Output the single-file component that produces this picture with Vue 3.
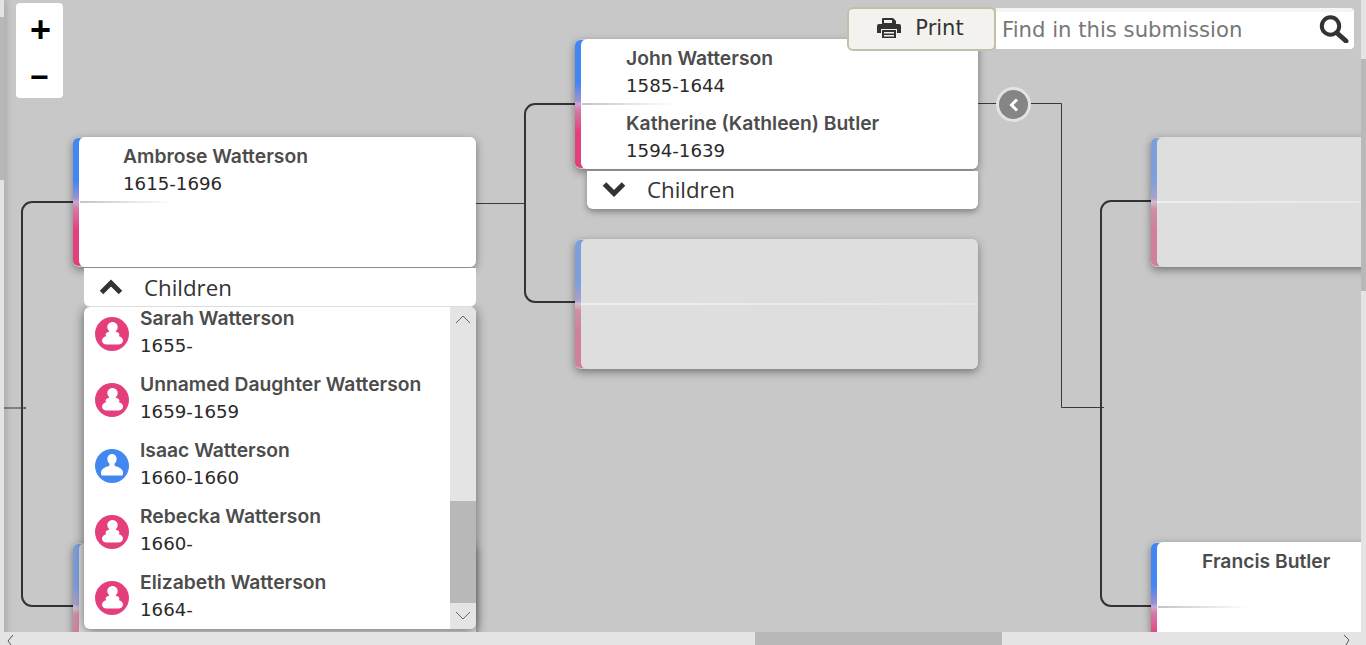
<script setup>
const kids = [
  { name: 'Sarah Watterson', dates: '1655-', sex: 'f' },
  { name: 'Unnamed Daughter Watterson', dates: '1659-1659', sex: 'f' },
  { name: 'Isaac Watterson', dates: '1660-1660', sex: 'm' },
  { name: 'Rebecka Watterson', dates: '1660-', sex: 'f' },
  { name: 'Elizabeth Watterson', dates: '1664-', sex: 'f' }
]
</script>

<template>
  <div class="page">
    <svg class="lines" width="1366" height="645" viewBox="0 0 1366 645" fill="none">
      <path class="thick" d="M73 202H32a10 10 0 0 0-10 10V596a10 10 0 0 0 10 10H73" />
      <path class="thin" d="M4 408H26M25 407V409" />
      <path class="thin" d="M476 203.500H525" />
      <path class="thick" d="M575 104H535a10 10 0 0 0-10 10V292a10 10 0 0 0 10 10H575" />
      <path class="thin" d="M978 103.500H1061.500V407.500H1104" />
      <path class="thick" d="M1151 201H1111a10 10 0 0 0-10 10V596a10 10 0 0 0 10 10H1151" />
    </svg>

    <div class="card card-hidden dim"></div>
    <div class="card card-ambrose">
      <div class="half">
        <div class="name">Ambrose Watterson</div>
        <div class="dates">1615-1696</div>
      </div>
      <div class="rule"></div>
    </div>

    <div class="drop">
      <div class="list">
        <div class="kid" v-for="k in kids" :key="k.name">
          <svg class="avatar" width="34" height="34" viewBox="0 0 34 34">
            <circle cx="17" cy="17" r="17" :fill="k.sex === 'f' ? '#e43f7c' : '#4288f0'" />
            <path v-if="k.sex === 'f'" fill="#fff" d="M17 5c3.400 0 5.700 2.200 5.700 5 0 2-1 3.400-2.200 4.400 1.600.6 3.700 1.200 3.900 3 .1.700-.3 1.300-.9 1.700 2.700.9 4.500 2.200 4.500 4.400 0 2.500-2.200 3.900-4.800 3.900H11.800C9.200 27.400 7 26 7 23.500c0-2.200 1.800-3.500 4.500-4.400-.6-.4-1-1-.9-1.700.2-1.800 2.300-2.400 3.900-3-1.200-1-2.200-2.400-2.200-4.400 0-2.800 2.300-5 5.700-5z" />
            <path v-else fill="#fff" d="M17 5c2.800 0 4.600 2.200 4.600 5 0 2-.9 3.600-2 4.700v2.100c2.600 1 6.900 2.200 8 5 .6 1.500.6 3-.2 4.700H6.600c-.8-1.700-.8-3.200-.2-4.700 1.100-2.800 5.400-4 8-5v-2.100c-1.100-1.100-2-2.700-2-4.700 0-2.800 1.800-5 4.600-5z" />
          </svg>
          <div class="kid-text">
            <div class="name">{{ k.name }}</div>
            <div class="dates">{{ k.dates }}</div>
          </div>
        </div>
      </div>
      <div class="vbar">
        <svg class="arrow" width="26" height="24" viewBox="0 0 26 24"><path d="M6 16l7-7 7 7" /></svg>
        <div class="vthumb"></div>
        <svg class="arrow" width="26" height="26" viewBox="0 0 26 26"><path d="M6 9l7 7 7-7" /></svg>
      </div>
    </div>

    <div class="children children-ambrose">
      <svg class="chev" width="24" height="16" viewBox="0 0 24 16"><path d="M2.500 13.500L12 4l9.500 9.500" /></svg>
      <span>Children</span>
    </div>

    <div class="card card-john">
      <div class="half">
        <div class="name">John Watterson</div>
        <div class="dates">1585-1644</div>
      </div>
      <div class="half">
        <div class="name">Katherine (Kathleen) Butler</div>
        <div class="dates">1594-1639</div>
      </div>
      <div class="rule"></div>
    </div>
    <div class="children children-john">
      <svg class="chev" width="24" height="16" viewBox="0 0 24 16"><path d="M2.500 3L12 12.500 21.500 3" /></svg>
      <span>Children</span>
    </div>

    <div class="card card-empty dim"><div class="rule rule-wide"></div></div>
    <div class="card card-right dim"><div class="rule rule-wide"></div></div>
    <div class="card card-francis">
      <div class="half centered"><div class="name">Francis Butler</div></div>
      <div class="rule"></div>
    </div>

    <div class="toggle">
      <svg width="12" height="14" viewBox="0 0 12 14"><path d="M9 1.500L3.500 7 9 12.500" /></svg>
    </div>

    <div class="zoom">
      <div class="zoom-btn plus">+</div>
      <div class="zoom-btn minus">−</div>
    </div>

    <div class="tools">
      <button class="print">
        <svg width="24" height="20" viewBox="0 0 24 20">
          <path fill="#333" d="M6 0h10l3 3v4H5V1a1 1 0 0 1 1-1z" />
          <path fill="#333" d="M2 6h20a2 2 0 0 1 2 2v7h-4v-4H4v4H0V8a2 2 0 0 1 2-2z" />
          <path fill="#333" d="M5 12h14v8H5z" />
          <path fill="#f3f2ee" d="M7 14h10v1.500H7zM7 17h10v1.500H7zM7 2h8v3H7z" />
        </svg>
        <span>Print</span>
      </button>
      <div class="search">
        <span class="placeholder">Find in this submission</span>
        <svg class="glass" width="30" height="28" viewBox="0 0 30 28" fill="none">
          <circle cx="11.500" cy="11" r="8.700" stroke="#333" stroke-width="4" />
          <path d="M18 18l9 8" stroke="#333" stroke-width="5" stroke-linecap="round" />
        </svg>
      </div>
    </div>

    <div class="side-left"><div class="side-left-thumb"></div></div>
    <div class="side-right"><div class="side-right-thumb"></div></div>
    <div class="hbar">
      <svg class="harrow" width="14" height="13" viewBox="0 0 14 13"><path d="M9 3L4 9l3 4" /></svg>
      <div class="hthumb"></div>
      <svg class="harrow" width="14" height="13" viewBox="0 0 14 13"><path d="M5 3l5 5-3 5" /></svg>
    </div>
  </div>
</template>

<style>
html, body { margin: 0; overflow: hidden; }
</style>

<style scoped>
.page {
  position: relative;
  width: 1366px;
  height: 645px;
  overflow: hidden;
  background: #c8c8c8;
  font-family: "DejaVu Sans", sans-serif;
}
.lines { position: absolute; left: 0; top: 0; }
.thick { stroke: #333; stroke-width: 2; }
.thin { stroke: #3a3a3a; stroke-width: 1; }

.card {
  position: absolute;
  box-sizing: border-box;
  height: 130px;
  padding-left: 6px;
  border-top: 1px solid transparent;
  border-bottom: 1px solid transparent;
  border-radius: 6px;
  background: linear-gradient(#4285f4 0%, #4285f4 33%, #9a8fd8 47%, #c8a8d0 50%, #d878a8 55%, #e43f7c 72%, #e43f7c 100%) padding-box;
  box-shadow: 0 3px 8px rgba(0, 0, 0, .42);
}
.card::before {
  content: "";
  position: absolute;
  left: 6px;
  right: 0;
  top: -1px;
  bottom: -1px;
  background: #fff;
  border-radius: 6px;
}
.card-ambrose { left: 73px; top: 137px; width: 403px; }
.card-john { left: 575px; top: 39px; width: 403px; }
.card-john .half { padding-left: 45px; }
.card-empty { left: 575px; top: 239px; width: 403px; }
.card-right { left: 1151px; top: 137px; width: 260px; }
.card-francis { left: 1151px; top: 542px; width: 260px; }
.card-hidden { left: 73px; top: 543px; width: 403px; }
.dim { background: linear-gradient(#7e9fdc 0%, #7e9fdc 33%, #a8a0cc 47%, #d0c0d0 50%, #d090a8 55%, #d0809c 72%, #d0809c 100%) padding-box; }
.dim::before { background: #dedede; }

.half {
  position: relative;
  height: 65px;
  box-sizing: border-box;
  padding-left: 44px;
  padding-top: 5px;
}
.centered { padding-left: 45px; }
.rule {
  position: absolute;
  left: 7px;
  top: 63px;
  width: 92px;
  height: 2px;
  background: linear-gradient(90deg, #c4c4c4, rgba(255, 255, 255, 0));
}
.rule-wide { left: 6px; right: 0; width: auto; background: linear-gradient(90deg, #efefef, #e6e6e6); }

.name {
  height: 27px;
  font-family: Inter, sans-serif;
  font-size: 19.300px;
  font-weight: 600;
  line-height: 27px;
  color: #4c4c4c;
  white-space: nowrap;
}
.dates {
  height: 27px;
  font-size: 18.200px;
  line-height: 27px;
  color: #2a2a2a;
  white-space: nowrap;
}

.children {
  position: absolute;
  box-sizing: border-box;
  height: 38px;
  display: flex;
  align-items: center;
  padding-left: 15px;
  gap: 21px;
  background: #fff;
  border-radius: 0 0 6px 6px;
  font-family: "Open Sans", sans-serif;
  font-size: 22.300px;
  color: #333;
}
.children-ambrose { left: 84px; top: 268px; width: 392px; height: 39px; border-bottom: 1px solid #dcdcdc; }
.children-john { left: 587px; top: 171px; width: 391px; padding-bottom: 2px; box-shadow: 0 3px 6px rgba(0, 0, 0, .35); }
.chev { flex: none; }
.chev path { fill: none; stroke: #333; stroke-width: 5; }

.drop {
  position: absolute;
  left: 84px;
  top: 307px;
  width: 392px;
  height: 322px;
  display: flex;
  overflow: hidden;
  background: #fff;
  border-radius: 6px;
  box-shadow: 0 2px 12px rgba(0, 0, 0, .5);
}
.list { flex: 1; margin-top: -6px; }
.kid {
  box-sizing: border-box;
  height: 66px;
  display: flex;
  align-items: center;
  gap: 11px;
  padding-left: 11px;
}
.avatar { flex: none; }
.kid-text { padding-bottom: 5px; }
.vbar {
  width: 26px;
  display: flex;
  flex-direction: column;
  background: #e4e4e4;
}
.arrow { flex: none; }
.arrow path { fill: none; stroke: #666; stroke-width: 1; }
.vthumb { margin-top: 170px; height: 102px; background: #b8b8b8; }

.toggle {
  position: absolute;
  left: 996px;
  top: 87px;
  box-sizing: border-box;
  width: 35px;
  height: 35px;
  display: flex;
  align-items: center;
  justify-content: center;
  border: 3px solid #e3e3e3;
  border-radius: 50%;
  background: #858585;
}
.toggle path { fill: none; stroke: #fff; stroke-width: 3; }

.zoom {
  position: absolute;
  left: 16px;
  top: 3px;
  width: 47px;
  height: 95px;
  display: flex;
  flex-direction: column;
  background: #fff;
  border-radius: 4px;
}
.zoom-btn {
  flex: 1;
  display: flex;
  align-items: center;
  justify-content: center;
  padding-top: 6px;
  font-family: "Liberation Sans", sans-serif;
  font-size: 32px;
  font-weight: 700;
  color: #000;
}
.plus { padding-left: 2px; font-size: 36px; }

.tools {
  position: absolute;
  left: 847px;
  top: 7px;
  display: flex;
  align-items: flex-start;
}
.print {
  box-sizing: border-box;
  width: 149px;
  height: 44px;
  margin: 0;
  padding: 0 2px 2px 0;
  display: flex;
  align-items: center;
  justify-content: center;
  gap: 14px;
  border: 2px solid #c4bfa9;
  border-radius: 6px;
  background: #f3f2ee;
  font-family: "DejaVu Sans", sans-serif;
  font-size: 21px;
  color: #333;
}
.search {
  box-sizing: border-box;
  width: 358px;
  height: 41px;
  margin-top: 1px;
  display: flex;
  align-items: center;
  justify-content: space-between;
  padding: 0 5px 2px 6px;
  background: #fff;
  border-top: 4px solid #f5f5f5;
  border-radius: 0 4px 4px 0;
}
.placeholder { font-size: 21.200px; color: #777; }
.glass { flex: none; margin-top: -2px; }

.side-left {
  position: absolute;
  left: 0;
  top: 0;
  width: 4px;
  height: 645px;
  background: #e4e4e4;
  box-shadow: 2px 0 6px rgba(0, 0, 0, .22);
}
.side-left-thumb { margin-top: 17px; height: 163px; background: #b8b8b8; }
.side-right {
  position: absolute;
  left: 1361px;
  top: 0;
  width: 5px;
  height: 645px;
  background: #e4e4e4;
}
.side-right-thumb { margin-top: 59px; height: 232px; background: #b8b8b8; }
.hbar {
  position: absolute;
  left: 4px;
  top: 632px;
  width: 1362px;
  height: 13px;
  display: flex;
  background: #e4e4e4;
}
.harrow { flex: none; }
.harrow path { fill: none; stroke: #555; stroke-width: 1; }
.hthumb { margin-left: 737px; width: 247px; background: #b8b8b8; }
.hbar .harrow:last-child { margin-left: 337px; }
</style>
